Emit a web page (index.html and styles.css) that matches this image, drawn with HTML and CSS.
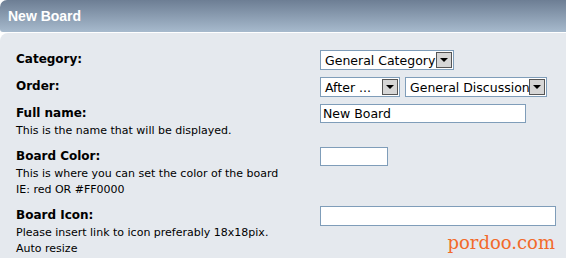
FILE: index.html
```html
<!DOCTYPE html>
<html lang="en">
<head>
  <meta charset="UTF-8" />
  <title>New Board</title>
  <link rel="stylesheet" href="styles.css">
</head>
<body>

  <div class="cat-bar">
    <h3>New Board</h3>
  </div>

  <div class="window-bg">
    <div class="form-row">
      <div class="label"><strong>Category:</strong></div>
      <div class="field">
        <span class="select-box w-cat">
          <span class="select-text">General Category</span>
          <span class="select-arrow"></span>
        </span>
      </div>
    </div>

    <div class="form-row">
      <div class="label"><strong>Order:</strong></div>
      <div class="field">
        <span class="select-box w-order">
          <span class="select-text">After ...</span>
          <span class="select-arrow"></span>
        </span>
        <span class="select-box w-board">
          <span class="select-text">General Discussion</span>
          <span class="select-arrow"></span>
        </span>
      </div>
    </div>

    <div class="form-row has-desc">
      <div class="label">
        <strong>Full name:</strong>
        <span class="smalltext">This is the name that will be displayed.</span>
      </div>
      <div class="field">
        <input type="text" class="input w-name" value="New Board" />
      </div>
    </div>

    <div class="form-row has-desc">
      <div class="label">
        <strong>Board Color:</strong>
        <span class="smalltext">This is where you can set the color of the board<br />IE: red OR #FF0000</span>
      </div>
      <div class="field">
        <input type="text" class="input w-color" value="" />
      </div>
    </div>

    <div class="form-row has-desc">
      <div class="label">
        <strong>Board Icon:</strong>
        <span class="smalltext">Please insert link to icon preferably 18x18pix.<br />Auto resize</span>
      </div>
      <div class="field">
        <input type="text" class="input w-icon" value="" />
      </div>
    </div>

    <!-- watermark -->
    <span class="watermark">pordoo.com</span>
  </div>

</body>
</html>
```

FILE: styles.css
```css
body {
  margin: 0;
  background: #fff;
  font-family: "DejaVu Sans", Verdana, sans-serif;
  color: #000;
}

.cat-bar {
  height: 32px;
  background: linear-gradient(to bottom, #6d7e94, #a7bacd);
  border-top-left-radius: 7px;
  border-bottom-left-radius: 3px;
  padding-left: 8px;
  display: flex;
  align-items: center;
}

.cat-bar h3 {
  margin: 0;
  color: #fff;
  font-family: "Liberation Sans", Arial, sans-serif;
  font-size: 14px;
  font-weight: bold;
}

.window-bg {
  position: relative;
  margin-top: 1px;
  background: #e5e9ee;
  border-top-left-radius: 8px;
  padding: 17px 0 0 16px;
  height: 225px;
  box-sizing: border-box;
  display: flex;
  flex-direction: column;
  gap: 7px;
}

.form-row {
  display: grid;
  grid-template-columns: 304px 1fr;
  align-items: start;
}

.form-row.has-desc {
  padding-bottom: 1px;
}

.label strong {
  display: block;
  font-size: 12px;
  line-height: 19px;
}

.smalltext {
  display: block;
  font-size: 11px;
  line-height: 16px;
}

.field {
  display: flex;
  gap: 5px;
}

.select-box {
  display: flex;
  align-items: center;
  height: 20px;
  box-sizing: border-box;
  border: 1px solid #7f9db9;
  background: #fff;
  font-size: 12.5px;
}

.select-text {
  flex: 1;
  padding-left: 4px;
  white-space: nowrap;
  overflow: hidden;
}

.select-arrow {
  width: 16px;
  height: 16px;
  box-sizing: border-box;
  margin-right: 1px;
  border: 1px solid #555;
  background: #d6d6d6;
  display: flex;
  align-items: center;
  justify-content: center;
}

.select-arrow::after {
  content: "";
  border-left: 4px solid transparent;
  border-right: 4px solid transparent;
  border-top: 4px solid #000;
}

.w-cat { width: 134px; }
.w-order { width: 80px; }
.w-board { width: 142px; }

.input {
  height: 19px;
  box-sizing: border-box;
  border: 1px solid #7f9db9;
  background: #fff;
  padding: 0 2px;
  font-family: "DejaVu Sans", Verdana, sans-serif;
  font-size: 12.5px;
  margin: 0;
}

.w-name { width: 206px; }
.w-color { width: 68px; }
.w-icon { width: 236px; height: 20px; }

.watermark {
  position: absolute;
  right: 11px;
  bottom: 5px;
  color: #f26a2a;
  font-family: "DejaVu Serif", Georgia, serif;
  font-size: 18px;
}
```
